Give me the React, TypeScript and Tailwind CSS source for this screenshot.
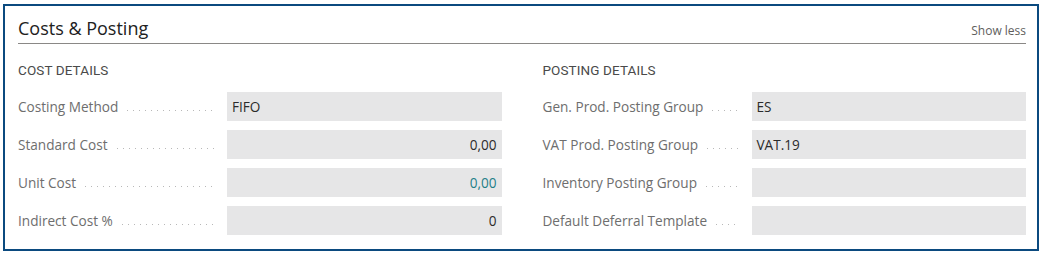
const costRows = [
  { label: "Costing Method", value: "FIFO", align: "left" },
  { label: "Standard Cost", value: "0,00", align: "right" },
  { label: "Unit Cost", value: "0,00", align: "right", link: true },
  { label: "Indirect Cost %", value: "0", align: "right" },
];

const postingRows = [
  { label: "Gen. Prod. Posting Group", value: "ES", align: "left" },
  { label: "VAT Prod. Posting Group", value: "VAT.19", align: "left" },
  { label: "Inventory Posting Group", value: "", align: "left" },
  { label: "Default Deferral Template", value: "", align: "left" },
];

type Row = { label: string; value: string; align: string; link?: boolean };

function Field({ row }: { row: Row }) {
  return (
    <div className="flex h-[29px] items-center">
      <div className="flex h-full w-[209px] shrink-0 items-center pr-[12px] pt-[2px]">
        <span className="whitespace-nowrap text-[13.6px] text-[#6e6e6e]">{row.label}</span>
        <span className="ml-[9px] h-[1.5px] flex-1 translate-y-[3px] bg-[linear-gradient(to_right,#b8b8b8_1.5px,transparent_1.5px)] bg-[length:6px_1.5px] bg-repeat-x" />
      </div>
      <div
        className={
          "flex h-full flex-1 items-center bg-[#e6e6e7] px-[5px] pt-[2px] text-[13.6px] " +
          (row.align === "right" ? "justify-end " : "justify-start ") +
          (row.link ? "text-[#1f7f88]" : "text-[#2b2b2b]")
        }
      >
        {row.value}
      </div>
    </div>
  );
}

function Section({ title, rows }: { title: string; rows: Row[] }) {
  return (
    <div>
      <h3 className="h-[16px] font-['Roboto',sans-serif] text-[13.5px] font-normal uppercase leading-[16px] tracking-[0.1px] text-[#4a4a4a]">
        {title}
      </h3>
      <div className="mt-[14px] flex flex-col gap-[9px]">
        {rows.map((r) => (
          <Field key={r.label} row={r} />
        ))}
      </div>
    </div>
  );
}

export default function App() {
  return (
    <div className="h-[255px] w-[1043px] bg-white pl-[3px] pt-[4px] font-['Segoe_UI','Open_Sans',sans-serif]">
      <div className="h-[247px] w-[1036px] border-2 border-[#0b4a7f] pl-[13px] pr-[11px]">
        <div className="flex h-[38px] items-end justify-between border-b border-[#8a8886] pb-[3px]">
          <h2 className="text-[18px] leading-[24px] text-[#212121]">Costs &amp; Posting</h2>
          <button type="button" className="pb-[1px] text-[12px] leading-[16px] text-[#605e5c]">
            Show less
          </button>
        </div>
        <div className="mt-[18px] grid grid-cols-2 gap-x-[41px]">
          <Section title="Cost Details" rows={costRows} />
          <Section title="Posting Details" rows={postingRows} />
        </div>
      </div>
    </div>
  );
}
